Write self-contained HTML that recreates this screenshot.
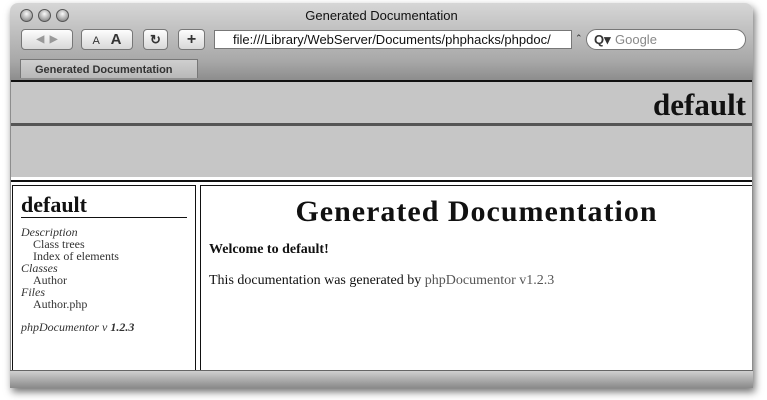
<!DOCTYPE html>
<html><head><style>
*{margin:0;padding:0;box-sizing:border-box}
body{width:767px;height:400px;background:#fff;position:relative;overflow:hidden;font-family:"Liberation Sans",sans-serif}
.win{position:absolute;left:10px;top:3px;width:743px;height:385px;border-radius:8px 8px 0 0;background:linear-gradient(#d6d6d6,#a8a8a8 58px,#8d8d8d 77px);box-shadow:2px 4px 8px rgba(0,0,0,.55);overflow:hidden}
.t{position:absolute;left:0;width:100%;text-align:center;top:5px;font-size:13px;color:#111}
.light{position:absolute;top:6px;width:13px;height:13px;border-radius:50%;background:radial-gradient(circle at 50% 35%,#fafafa,#9a9a9a 70%,#666);border:1px solid #555}
.btn{position:absolute;top:26px;height:21px;border-radius:4px;background:linear-gradient(#fdfdfd,#d8d8d8);border:1px solid #777;font-size:13px;font-weight:bold;color:#333;text-align:center;line-height:19px}
.url{position:absolute;left:204px;top:27px;width:358px;height:19px;background:#fff;border:1px solid #777;font-size:13px;line-height:17px;padding-left:18px;color:#111;white-space:nowrap;overflow:hidden}
.srch{position:absolute;left:576px;top:26px;width:160px;height:21px;border-radius:11px;background:#fff;border:1px solid #777;font-size:13px;line-height:19px;color:#888;padding-left:28px}
.tab{position:absolute;left:10px;top:56px;width:178px;height:19px;background:linear-gradient(#cfcfcf,#b8b8b8);border:1px solid #777;border-bottom:none;font-size:11px;font-weight:bold;color:#333;padding-left:14px;line-height:20px}
.page{position:absolute;left:1px;top:77px;width:741px;height:290px;background:#fff;border-top:2px solid #111}
.hd1{position:absolute;left:0;top:0;width:100%;height:44px;background:#c6c6c6;border-bottom:3px solid #555;text-align:right;font-family:"Liberation Serif",serif;font-weight:bold;font-size:31px;padding-right:6px;line-height:45px;color:#111}
.hd2{position:absolute;left:0;top:44px;width:100%;height:54px;background:#c6c6c6;border-bottom:3px solid #fff}
.sep{position:absolute;left:0;top:98px;width:100%;height:2px;background:#111}
.lf{position:absolute;left:1px;top:103px;width:184px;height:188px;border:1px solid #111;border-bottom:none;padding:8px 8px;font-family:"Liberation Serif",serif;font-size:12px;line-height:12px;color:#333}
.rf{position:absolute;left:189px;top:103px;width:552px;height:188px;border:1px solid #111;border-bottom:none;border-right:none;font-family:"Liberation Serif",serif}
.bot{position:absolute;left:0;top:367px;width:100%;height:18px;background:linear-gradient(#d0d0d0,#8a8a8a);border-top:1px solid #666}
</style></head><body>
<div class="win">
<div class="t">Generated Documentation</div>
<div class="light" style="left:10px"></div><div class="light" style="left:28px"></div><div class="light" style="left:46px"></div>
<div class="btn" style="left:11px;width:52px;color:#999;font-size:10px">◀ &nbsp;▶</div>
<div class="btn" style="left:71px;width:52px"><span style="font-size:11px;font-weight:normal">A</span>&nbsp;&nbsp; <span style="font-size:15px">A</span></div>
<div class="btn" style="left:133px;width:25px">↻</div>
<div class="btn" style="left:168px;width:27px;font-size:16px">+</div>
<div class="url">file:///Library/WebServer/Documents/phphacks/phpdoc/</div>
<div style="position:absolute;left:565px;top:30px;font-size:9px;color:#333">⌃</div>
<div class="srch"><span style="position:absolute;left:7px;color:#333;font-weight:bold">Q▾</span>Google</div>
<div class="tab">Generated Documentation</div>
<div class="page">
<div class="hd1">default</div>
<div class="hd2"></div>
<div class="sep"></div>
<div class="lf">
<div style="font-size:22px;font-weight:bold;color:#111;line-height:22px;border-bottom:1px solid #111;padding-bottom:1px;margin-bottom:8px">default</div>
<i>Description</i><br>&nbsp;&nbsp;&nbsp;&nbsp;Class trees<br>&nbsp;&nbsp;&nbsp;&nbsp;Index of elements<br><i>Classes</i><br>&nbsp;&nbsp;&nbsp;&nbsp;Author<br><i>Files</i><br>&nbsp;&nbsp;&nbsp;&nbsp;Author.php<br><div style="margin-top:11px"><i>phpDocumentor v <b>1.2.3</b></i></div>
</div>
<div class="rf">
<div style="text-align:center;font-size:30px;letter-spacing:1px;font-weight:bold;color:#111;margin-top:9px">Generated Documentation</div>
<div style="font-size:14px;font-weight:bold;margin:13px 0 0 8px;color:#111">Welcome to default!</div>
<div style="font-size:14px;margin:15px 0 0 8px;color:#111">This documentation was generated by <span style="color:#555">phpDocumentor v1.2.3</span></div>
</div>
</div>
<div class="bot"></div>
</div>
</body></html>
